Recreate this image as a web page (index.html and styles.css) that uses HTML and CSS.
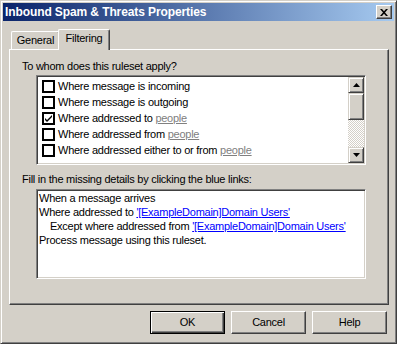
FILE: index.html
```html
<!doctype html>
<html>
<head>
<meta charset="utf-8">
<title>Inbound Spam &amp; Threats Properties</title>
<link rel="stylesheet" href="styles.css">
</head>
<body>
<div class="window">
	<div class="titlebar">
		<span class="title">Inbound Spam &amp; Threats Properties</span>
		<span class="close-btn">
			<svg width="8" height="7" viewBox="0 0 8 7"><path d="M0 0h2l2 2.2L6 0h2L5 3.5 8 7H6L4 4.8 2 7H0l3-3.5z"/></svg>
		</span>
	</div>

	<div class="tabs">
		<div class="tab">General</div>
		<div class="tab active">Filtering</div>
	</div>

	<div class="panel">
		<div class="label">To whom does this ruleset apply?</div>
		<div class="listbox">
			<div class="items">
				<div class="item"><span class="check"></span>Where message is incoming</div>
				<div class="item"><span class="check"></span>Where message is outgoing</div>
				<div class="item"><span class="check"><svg width="9" height="9" viewBox="0 0 9 9"><path d="M1 4l2 2 5-5v2L3 8 1 6z"/></svg></span>Where addressed to&nbsp;<a href="#" class="grey">people</a></div>
				<div class="item"><span class="check"></span>Where addressed from&nbsp;<a href="#" class="grey">people</a></div>
				<div class="item"><span class="check"></span>Where addressed either to or from&nbsp;<a href="#" class="grey">people</a></div>
			</div>
			<div class="scrollbar">
				<span class="sb-btn"><svg width="7" height="4" viewBox="0 0 7 4"><path d="M3.5 0L7 4H0z"/></svg></span>
				<span class="sb-thumb"></span>
				<span class="sb-track"></span>
				<span class="sb-btn"><svg width="7" height="4" viewBox="0 0 7 4"><path d="M0 0h7L3.5 4z"/></svg></span>
			</div>
		</div>

		<div class="label label2">Fill in the missing details by clicking the blue links:</div>
		<div class="textbox">
			<div class="line">When a message arrives</div>
			<div class="line">Where addressed to <a href="#" class="blue">'[ExampleDomain]Domain Users'</a></div>
			<div class="line indent">Except where addressed from <a href="#" class="blue">'[ExampleDomain]Domain Users'</a></div>
			<div class="line">Process message using this ruleset.</div>
		</div>
	</div>

	<div class="buttons">
		<a href="#" class="btn default">OK</a>
		<a href="#" class="btn">Cancel</a>
		<a href="#" class="btn">Help</a>
	</div>
</div>
</body>
</html>
```

FILE: styles.css
```css
*{ margin:0; padding:0; box-sizing:border-box;}
body{ background:#d4d0c8; font:11px/13px "Liberation Sans", Arial, sans-serif; letter-spacing:-0.25px; color:#000;}
a{ color:#000; text-decoration:none;}

.window{ width:397px; height:344px; display:flex; flex-direction:column; padding:2px; border:1px solid; border-color:#d4d0c8 #404040 #404040 #d4d0c8; box-shadow:inset 1px 1px #fff, inset -1px -1px #808080;}

.titlebar{ height:18px; display:flex; align-items:center; justify-content:space-between; padding:0 2px; background:linear-gradient(to right,#0a246a,#a6caf0); color:#fff; font-weight:bold; font-size:12px; line-height:14px; letter-spacing:-0.1px;}
.close-btn{ width:16px; height:14px; display:flex; align-items:center; justify-content:center; background:#d4d0c8; border:1px solid; border-color:#fff #404040 #404040 #fff; box-shadow:inset -1px -1px #808080;}
.close-btn svg{ fill:#000;}

.tabs{ display:flex; align-items:flex-end; height:20px; margin-top:8px; padding-left:8px;}
.tab{ height:18px; width:49px; padding-top:2px; text-align:center; border:1px solid; border-bottom:0; border-color:#fff #404040 #fff #fff; border-radius:2px 2px 0 0; box-shadow:inset -1px 0 #808080;}
.tab.active{ width:52px; height:21px; margin-left:-2px; margin-bottom:-1px; position:relative; z-index:1; background:#d4d0c8;}

.panel{ width:380px; height:256px; margin-left:6px; padding:10px 0 0 12px; border:1px solid; border-color:#fff #404040 #404040 #fff; box-shadow:inset -1px -1px #808080;}
.label2{ margin-top:8px;}

.listbox, .textbox{ width:330px; height:90px; margin-left:14px; background:#fff; border:1px solid; border-color:#808080 #fff #fff #808080; box-shadow:inset 1px 1px #404040, inset -1px -1px #d4d0c8;}
.listbox{ display:flex; margin-top:2px; padding:1px;}
.items{ flex:1; padding-top:1px; overflow:hidden; line-height:16px;}
.item{ height:16px; display:flex; align-items:center; padding-left:4px; white-space:nowrap;}
.check{ width:13px; height:13px; flex:none; margin-right:3px; border:2px solid #000; background:#fff; display:flex; align-items:center; justify-content:center;}
.check svg{ fill:#000;}
.grey{ color:#808080; text-decoration:underline;}

.scrollbar{ width:16px; display:flex; flex-direction:column;}
.sb-btn, .sb-thumb{ background:#d4d0c8; border:1px solid; border-color:#d4d0c8 #404040 #404040 #d4d0c8; box-shadow:inset 1px 1px #fff, inset -1px -1px #808080;}
.sb-btn{ height:16px; display:flex; align-items:center; justify-content:center;}
.sb-btn svg{ fill:#000;}
.sb-thumb{ height:27px;}
.sb-track{ flex:1; background:repeating-conic-gradient(#fff 0 25%, #d4d0c8 0 50%) 0 0/2px 2px;}

.textbox{ margin-top:3px; padding:1px 1px 1px 2px; line-height:14px;}
.line{ white-space:nowrap;}
.indent{ padding-left:11px;}
.blue{ color:#0000ff; text-decoration:underline;}

.buttons{ display:flex; justify-content:flex-end; gap:6px; margin-top:6px; padding-right:7px;}
.btn{ width:75px; height:23px; display:flex; align-items:center; justify-content:center; border:1px solid; border-color:#fff #404040 #404040 #fff; box-shadow:inset -1px -1px #808080;}
.btn.default{ border-color:#000; box-shadow:inset 1px 1px #fff, inset -1px -1px #404040, inset -2px -2px #808080;}
```
